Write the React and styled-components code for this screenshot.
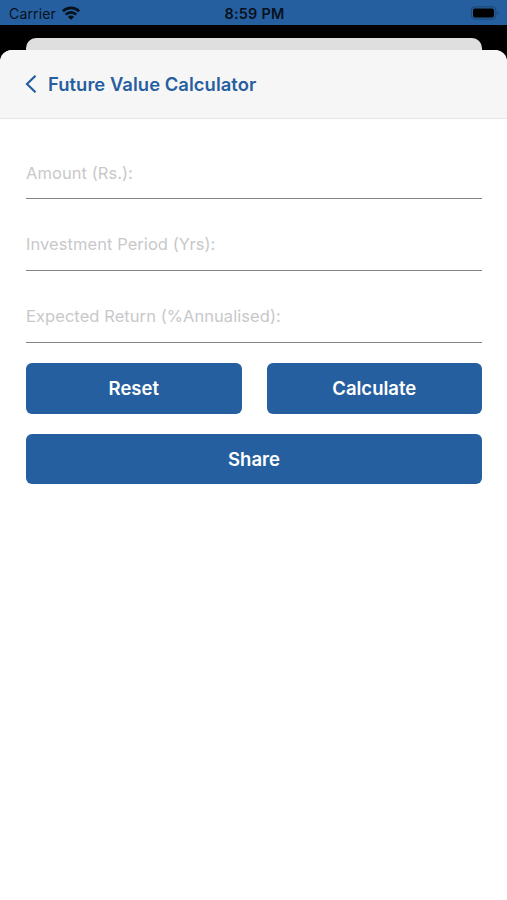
import styled, { createGlobalStyle } from "styled-components";

const GlobalStyle = createGlobalStyle`
  * {
    box-sizing: border-box;
  }

  body {
    margin: 0;
    background: #000;
    font-family: Inter, "Liberation Sans", sans-serif;
  }
`;

const Screen = styled.div`
  display: flex;
  flex-direction: column;
  height: 900px;
  background: #000;
  overflow: hidden;
`;

const StatusBar = styled.div`
  display: grid;
  grid-template-columns: 1fr auto 1fr;
  align-items: center;
  height: 25px;
  padding: 3px 7px 0 9px;
  background: #265f9f;
  color: #06111d;
  flex-shrink: 0;
`;

const Carrier = styled.div`
  display: flex;
  align-items: center;
  gap: 6px;
  font-size: 14px;
  line-height: 20px;
  letter-spacing: 0.15px;

  svg {
    margin-top: -2px;
  }
`;

const Clock = styled.div`
  font-size: 14.4px;
  line-height: 20px;
  font-weight: 600;
  letter-spacing: 0.25px;
`;

const Battery = styled.svg`
  justify-self: end;
  margin-top: -3px;
`;

const BackCard = styled.div`
  height: 12px;
  margin: 13px 25px 0 26px;
  border-radius: 10px 10px 0 0;
  background: #dfdfdf;
  flex-shrink: 0;
`;

const Sheet = styled.div`
  flex: 1;
  border-radius: 12px 12px 0 0;
  background: #fff;
  overflow: hidden;
`;

const Header = styled.header`
  display: flex;
  align-items: center;
  height: 69px;
  padding-left: 25px;
  background: #f7f6f7;
  border-bottom: 1px solid #e6e6e6;
`;

const Title = styled.h1`
  margin: 0 0 1px 11px;
  font-size: 18.4px;
  line-height: 24px;
  font-weight: 620;
  letter-spacing: 0.05px;
  color: #265f9f;
`;

const Form = styled.main`
  padding: 8px 25px 0 26px;
`;

const Field = styled.div`
  display: flex;
  align-items: flex-end;
  height: 72px;
  padding-bottom: 15px;
  border-bottom: 1px solid #858585;

  &:first-child {
    padding-bottom: 14px;
  }
`;

const Label = styled.label`
  font-size: 16.5px;
  line-height: 22px;
  letter-spacing: 0.06px;
  color: #c8c8ca;
`;

const Actions = styled.div`
  display: grid;
  grid-template-columns: 1fr 1fr;
  gap: 20px 25px;
  padding-top: 20px;
`;

const Button = styled.button`
  grid-column: ${props => props.$wide ? "1 / -1" : "auto"};
  height: 50.5px;
  padding: 0;
  border: none;
  border-radius: 6px;
  background: #265f9f;
  color: #fff;
  font-family: inherit;
  font-size: 18.5px;
  font-weight: 600;
`;

const fields = [
    "Amount (Rs.):",
    "Investment Period (Yrs):",
    "Expected Return (%Annualised):",
];

const WifiIcon = () => (
    <svg width="18" height="14" viewBox="0 0 18 14" fill="none" stroke="currentColor" strokeWidth="2.7">
        <path d="M0.9 5.2a11.5 11.5 0 0 1 16.2 0" />
        <path d="M3.8 8.6a7.4 7.4 0 0 1 10.4 0" />
        <path d="M9 13.8 5.9 10.9a4.4 4.4 0 0 1 6.2 0z" fill="currentColor" stroke="none" />
    </svg>
);

const BackIcon = () => (
    <svg width="12" height="20" viewBox="0 0 12 20" fill="none" stroke="#265f9f" strokeWidth="2.2">
        <path d="M10.5 1.7 2 10l8.5 8.3" />
    </svg>
);

export default function App() {
    return (
        <>
            <GlobalStyle />
            <Screen>
                <StatusBar>
                    <Carrier>
                        Carrier
                        <WifiIcon />
                    </Carrier>
                    <Clock>8:59 PM</Clock>
                    <Battery width="30" height="14" viewBox="0 0 30 14">
                        <rect x="1.4" y="0.8" width="24.4" height="12.4" rx="3.6" fill="none" stroke="#1b4a78" strokeWidth="1.2" />
                        <rect x="3" y="2.5" width="21" height="9" rx="2" fill="#000" />
                        <path d="M27.4 5v4a2.2 2.2 0 0 0 0-4z" fill="#1b4a78" />
                    </Battery>
                </StatusBar>
                <BackCard />
                <Sheet>
                    <Header>
                        <BackIcon />
                        <Title>Future Value Calculator</Title>
                    </Header>
                    <Form>
                        {fields.map(label => (
                            <Field key={label}>
                                <Label>{label}</Label>
                            </Field>
                        ))}
                        <Actions>
                            <Button>Reset</Button>
                            <Button>Calculate</Button>
                            <Button $wide>Share</Button>
                        </Actions>
                    </Form>
                </Sheet>
            </Screen>
        </>
    )
}
